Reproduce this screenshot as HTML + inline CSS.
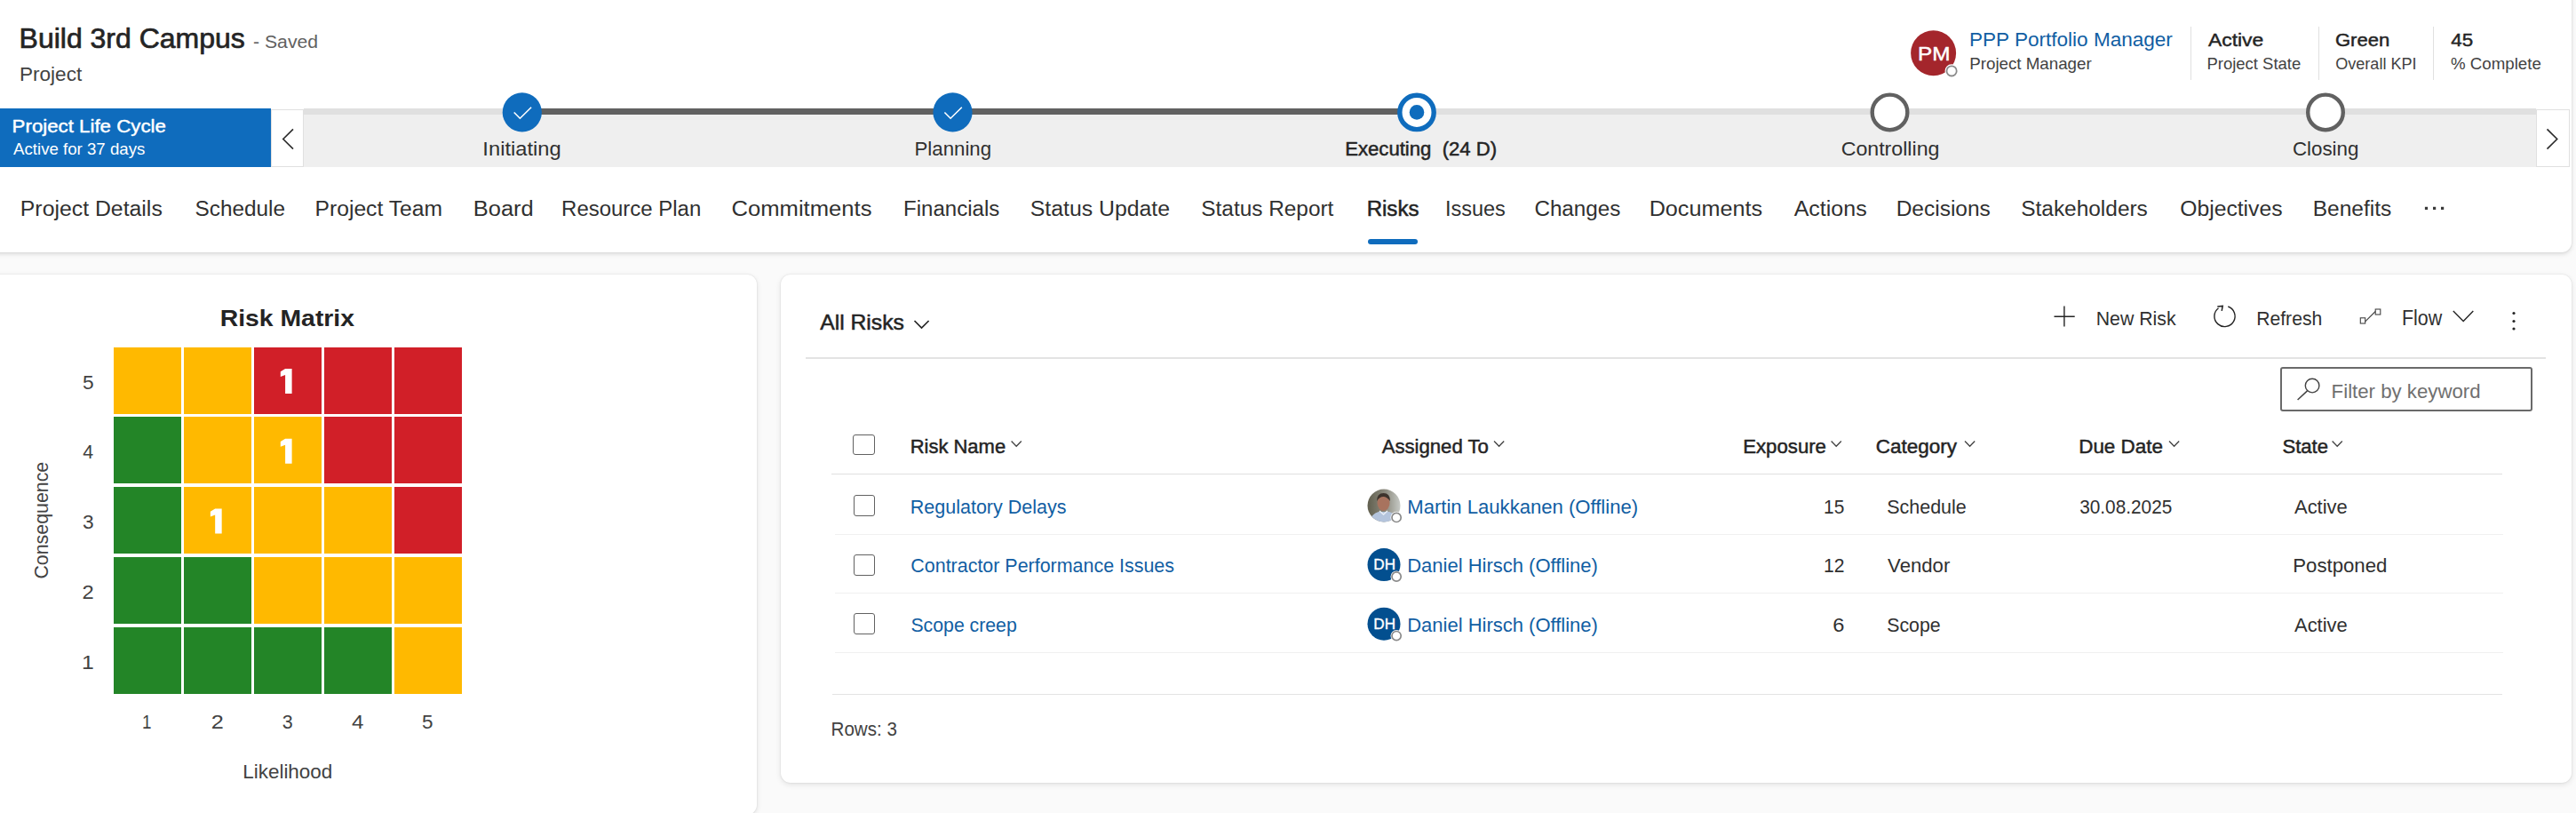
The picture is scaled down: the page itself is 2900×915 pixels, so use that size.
<!DOCTYPE html>
<html><head><meta charset="utf-8"><style>
html,body{margin:0;padding:0;}
body{width:2900px;height:915px;overflow:hidden;position:relative;background:#fafafa;font-family:"Liberation Sans",sans-serif;}
svg{position:absolute;left:0;top:0;}
svg text{font-family:"Liberation Sans",sans-serif;white-space:pre;}
</style></head><body>
<div style="position:absolute;left:-20.00px;top:-20.00px;width:2915.30px;height:303.50px;background:#fff;border-radius:11px;box-shadow:0 0 2px rgba(0,0,0,.10),0 2px 5px rgba(0,0,0,.13);"></div>
<div style="position:absolute;left:-20.00px;top:309.00px;width:872.30px;height:608.00px;background:#fff;border-radius:11px;box-shadow:0 0 2px rgba(0,0,0,.12),0 2px 6px rgba(0,0,0,.10);"></div>
<div style="position:absolute;left:878.60px;top:309.00px;width:2016.70px;height:572.00px;background:#fff;border-radius:11px;box-shadow:0 0 2px rgba(0,0,0,.12),0 2px 6px rgba(0,0,0,.10);"></div>
<div style="position:absolute;left:2465.50px;top:29.70px;width:1.00px;height:60.60px;background:#e0e0e0;"></div>
<div style="position:absolute;left:2609.50px;top:29.70px;width:1.00px;height:60.60px;background:#e0e0e0;"></div>
<div style="position:absolute;left:2739.30px;top:29.70px;width:1.00px;height:60.60px;background:#e0e0e0;"></div>
<div style="position:absolute;left:0.00px;top:122.00px;width:305.30px;height:66.00px;background:#0f6cbd;"></div>
<div style="position:absolute;left:305.30px;top:122.50px;width:37.10px;height:65.50px;background:#fff;box-sizing:border-box;border:1px solid #e0e0e0;"></div>
<div style="position:absolute;left:342.40px;top:122.00px;width:2512.60px;height:66.00px;background:#efefef;"></div>
<div style="position:absolute;left:342.40px;top:122.00px;width:2512.60px;height:7.00px;background:#e0e0e0;"></div>
<div style="position:absolute;left:587.80px;top:122.00px;width:1007.20px;height:7.00px;background:#616161;"></div>
<div style="position:absolute;left:2855.00px;top:122.50px;width:37.50px;height:65.50px;background:#fff;box-sizing:border-box;border:1px solid #e0e0e0;"></div>
<div style="position:absolute;left:1540.00px;top:269.20px;width:56.00px;height:5.50px;background:#0f6cbd;border-radius:3px;"></div>
<div style="position:absolute;left:128.20px;top:390.50px;width:75.60px;height:75.00px;background:#ffb900;"></div>
<div style="position:absolute;left:207.13px;top:390.50px;width:75.60px;height:75.00px;background:#ffb900;"></div>
<div style="position:absolute;left:286.06px;top:390.50px;width:75.60px;height:75.00px;background:#d11f28;"></div>
<div style="position:absolute;left:364.99px;top:390.50px;width:75.60px;height:75.00px;background:#d11f28;"></div>
<div style="position:absolute;left:443.92px;top:390.50px;width:75.60px;height:75.00px;background:#d11f28;"></div>
<div style="position:absolute;left:128.20px;top:469.30px;width:75.60px;height:75.00px;background:#238527;"></div>
<div style="position:absolute;left:207.13px;top:469.30px;width:75.60px;height:75.00px;background:#ffb900;"></div>
<div style="position:absolute;left:286.06px;top:469.30px;width:75.60px;height:75.00px;background:#ffb900;"></div>
<div style="position:absolute;left:364.99px;top:469.30px;width:75.60px;height:75.00px;background:#d11f28;"></div>
<div style="position:absolute;left:443.92px;top:469.30px;width:75.60px;height:75.00px;background:#d11f28;"></div>
<div style="position:absolute;left:128.20px;top:548.10px;width:75.60px;height:75.00px;background:#238527;"></div>
<div style="position:absolute;left:207.13px;top:548.10px;width:75.60px;height:75.00px;background:#ffb900;"></div>
<div style="position:absolute;left:286.06px;top:548.10px;width:75.60px;height:75.00px;background:#ffb900;"></div>
<div style="position:absolute;left:364.99px;top:548.10px;width:75.60px;height:75.00px;background:#ffb900;"></div>
<div style="position:absolute;left:443.92px;top:548.10px;width:75.60px;height:75.00px;background:#d11f28;"></div>
<div style="position:absolute;left:128.20px;top:626.90px;width:75.60px;height:75.00px;background:#238527;"></div>
<div style="position:absolute;left:207.13px;top:626.90px;width:75.60px;height:75.00px;background:#238527;"></div>
<div style="position:absolute;left:286.06px;top:626.90px;width:75.60px;height:75.00px;background:#ffb900;"></div>
<div style="position:absolute;left:364.99px;top:626.90px;width:75.60px;height:75.00px;background:#ffb900;"></div>
<div style="position:absolute;left:443.92px;top:626.90px;width:75.60px;height:75.00px;background:#ffb900;"></div>
<div style="position:absolute;left:128.20px;top:705.70px;width:75.60px;height:75.00px;background:#238527;"></div>
<div style="position:absolute;left:207.13px;top:705.70px;width:75.60px;height:75.00px;background:#238527;"></div>
<div style="position:absolute;left:286.06px;top:705.70px;width:75.60px;height:75.00px;background:#238527;"></div>
<div style="position:absolute;left:364.99px;top:705.70px;width:75.60px;height:75.00px;background:#238527;"></div>
<div style="position:absolute;left:443.92px;top:705.70px;width:75.60px;height:75.00px;background:#ffb900;"></div>
<div style="position:absolute;left:906.90px;top:402.40px;width:1959.60px;height:1.80px;background:#e3e3e3;"></div>
<div style="position:absolute;left:2567.20px;top:413.20px;width:283.40px;height:50.00px;background:#fff;box-sizing:border-box;border:2px solid #6a6a6a;border-radius:3px;"></div>
<div style="position:absolute;left:959.60px;top:488.90px;width:25.70px;height:23.60px;background:#fff;box-sizing:border-box;border:1.6px solid #616161;border-radius:3px;"></div>
<div style="position:absolute;left:936.40px;top:532.60px;width:1881.10px;height:1.30px;background:#e0e0e0;"></div>
<div style="position:absolute;left:961.40px;top:557.00px;width:24.00px;height:24.00px;background:#fff;box-sizing:border-box;border:1.6px solid #616161;border-radius:3px;"></div>
<div style="position:absolute;left:940.00px;top:600.80px;width:1877.50px;height:1.00px;background:#f0f0f0;"></div>
<div style="position:absolute;left:961.40px;top:623.60px;width:24.00px;height:24.00px;background:#fff;box-sizing:border-box;border:1.6px solid #616161;border-radius:3px;"></div>
<div style="position:absolute;left:940.00px;top:667.40px;width:1877.50px;height:1.00px;background:#f0f0f0;"></div>
<div style="position:absolute;left:961.40px;top:690.20px;width:24.00px;height:24.00px;background:#fff;box-sizing:border-box;border:1.6px solid #616161;border-radius:3px;"></div>
<div style="position:absolute;left:940.00px;top:734.20px;width:1877.50px;height:1.00px;background:#f0f0f0;"></div>
<div style="position:absolute;left:936.70px;top:781.30px;width:1880.80px;height:1.20px;background:#e3e3e3;"></div>
<svg width="2900" height="915" viewBox="0 0 2900 915">
<text transform="translate(21.54 53.80) scale(1.0287 1)" font-size="31.12" fill="#242424" stroke="#242424" stroke-width="0.68" stroke-linejoin="round">Build 3rd Campus</text>
<text transform="translate(285.05 53.80) scale(1.0334 1)" font-size="20.51" fill="#616161">- Saved</text>
<text transform="translate(21.89 90.60) scale(1.0664 1)" font-size="21.20" fill="#424242">Project</text>
<circle cx="2176.6" cy="59.8" r="25.5" fill="#a4262c"/>
<text transform="translate(2159.05 67.90) scale(1.1121 1)" font-size="21.89" fill="#fff" stroke="#fff" stroke-width="0.48" stroke-linejoin="round">PM</text>
<circle cx="2197.1" cy="79.9" r="6.3" fill="#fff" stroke="#fff" stroke-width="2.5"/><circle cx="2197.1" cy="79.9" r="5.6" fill="#fff" stroke="#8a8a8a" stroke-width="1.8"/>
<text transform="translate(2217.00 52.10) scale(1.0570 1)" font-size="21.34" fill="#115ea3">PPP Portfolio Manager</text>
<text transform="translate(2217.30 77.80) scale(1.0313 1)" font-size="18.17" fill="#424242">Project Manager</text>
<text transform="translate(2485.90 51.70) scale(1.0950 1)" font-size="20.93" fill="#242424" stroke="#242424" stroke-width="0.46" stroke-linejoin="round">Active</text>
<text transform="translate(2484.52 77.50) scale(1.0560 1)" font-size="17.49" fill="#424242">Project State</text>
<text transform="translate(2628.90 51.70) scale(1.0543 1)" font-size="20.93" fill="#242424" stroke="#242424" stroke-width="0.46" stroke-linejoin="round">Green</text>
<text transform="translate(2629.19 77.50) scale(1.0345 1)" font-size="17.49" fill="#424242">Overall KPI</text>
<text transform="translate(2759.25 51.70) scale(1.0694 1)" font-size="20.93" fill="#242424" stroke="#242424" stroke-width="0.46" stroke-linejoin="round">45</text>
<text transform="translate(2759.05 77.50) scale(1.0692 1)" font-size="17.49" fill="#424242">% Complete</text>
<text transform="translate(13.62 148.50) scale(1.0573 1)" font-size="21.07" fill="#fff" stroke="#fff" stroke-width="0.46" stroke-linejoin="round">Project Life Cycle</text>
<text transform="translate(15.10 174.40) scale(1.0191 1)" font-size="18.31" fill="#fff">Active for 37 days</text>
<polyline points="330,145.3 318.8,156.5 330,167.7" fill="none" stroke="#303030" stroke-width="1.7"/>
<polyline points="2867.5,145.3 2878.7,156.5 2867.5,167.7" fill="none" stroke="#303030" stroke-width="1.7"/>
<circle cx="587.8" cy="126.4" r="22.1" fill="#0f6cbd"/>
<polyline points="578.7,126.5 585.4,133.2 598.1,120.7" fill="none" stroke="#fff" stroke-width="1.6"/>
<circle cx="1072.5" cy="126.4" r="22.1" fill="#0f6cbd"/>
<polyline points="1063.4,126.5 1070.1,133.2 1082.8,120.7" fill="none" stroke="#fff" stroke-width="1.6"/>
<circle cx="1595" cy="126.4" r="19.2" fill="#fff" stroke="#0f6cbd" stroke-width="5.4"/><circle cx="1595" cy="126.4" r="8.3" fill="#0f6cbd"/>
<circle cx="2127.5" cy="126.4" r="19.8" fill="#fff" stroke="#616161" stroke-width="4.4"/>
<circle cx="2618.0" cy="126.4" r="19.8" fill="#fff" stroke="#616161" stroke-width="4.4"/>
<text transform="translate(543.36 174.60) scale(1.1190 1)" font-size="21.20" fill="#303030">Initiating</text>
<text transform="translate(1029.52 174.60) scale(1.0503 1)" font-size="21.20" fill="#303030">Planning</text>
<text transform="translate(1514.23 174.60) scale(1.0446 1)" font-size="21.20" fill="#242424" stroke="#242424" stroke-width="0.47" stroke-linejoin="round">Executing  (24 D)</text>
<text transform="translate(2072.64 174.60) scale(1.0939 1)" font-size="21.20" fill="#303030">Controlling</text>
<text transform="translate(2580.88 174.60) scale(1.0546 1)" font-size="21.20" fill="#303030">Closing</text>
<text transform="translate(22.81 243.30) scale(1.0249 1)" font-size="24.23" fill="#303030">Project Details</text>
<text transform="translate(219.50 243.30) scale(1.0054 1)" font-size="24.23" fill="#303030">Schedule</text>
<text transform="translate(354.53 243.30) scale(1.0188 1)" font-size="24.23" fill="#303030">Project Team</text>
<text transform="translate(532.76 243.30) scale(1.0513 1)" font-size="24.23" fill="#303030">Board</text>
<text transform="translate(632.08 243.30) scale(0.9894 1)" font-size="24.23" fill="#303030">Resource Plan</text>
<text transform="translate(823.52 243.30) scale(1.0573 1)" font-size="24.23" fill="#303030">Commitments</text>
<text transform="translate(1017.08 243.30) scale(0.9929 1)" font-size="24.23" fill="#303030">Financials</text>
<text transform="translate(1159.78 243.30) scale(1.0249 1)" font-size="24.23" fill="#303030">Status Update</text>
<text transform="translate(1352.30 243.30) scale(1.0065 1)" font-size="24.23" fill="#303030">Status Report</text>
<text transform="translate(1538.68 243.30) scale(0.9918 1)" font-size="24.23" fill="#242424" stroke="#242424" stroke-width="0.53" stroke-linejoin="round">Risks</text>
<text transform="translate(1626.88 243.30) scale(0.9701 1)" font-size="24.23" fill="#303030">Issues</text>
<text transform="translate(1727.39 243.30) scale(1.0001 1)" font-size="24.23" fill="#303030">Changes</text>
<text transform="translate(1856.68 243.30) scale(1.0398 1)" font-size="24.23" fill="#303030">Documents</text>
<text transform="translate(2019.70 243.30) scale(1.0314 1)" font-size="24.23" fill="#303030">Actions</text>
<text transform="translate(2134.64 243.30) scale(1.0112 1)" font-size="24.23" fill="#303030">Decisions</text>
<text transform="translate(2275.20 243.30) scale(1.0089 1)" font-size="24.23" fill="#303030">Stakeholders</text>
<text transform="translate(2454.19 243.30) scale(1.0205 1)" font-size="24.23" fill="#303030">Objectives</text>
<text transform="translate(2603.74 243.30) scale(1.0117 1)" font-size="24.23" fill="#303030">Benefits</text>
<rect x="2729.9" y="232.8" width="3.2" height="3.2" fill="#3a3a3a"/>
<rect x="2739.0" y="232.8" width="3.2" height="3.2" fill="#3a3a3a"/>
<rect x="2748.0" y="232.8" width="3.2" height="3.2" fill="#3a3a3a"/>
<text transform="translate(247.66 367.20) scale(1.0905 1)" font-size="26.02" fill="#242424" font-weight="bold">Risk Matrix</text>
<path transform="translate(0.00 0.00)" d="M321.1 415 L328.6 415 L328.6 442.9 L321.1 442.9 L321.1 422 L315.8 424 L315.8 418.2 Z" fill="#fff"/>
<path transform="translate(0.00 78.80)" d="M321.1 415 L328.6 415 L328.6 442.9 L321.1 442.9 L321.1 422 L315.8 424 L315.8 418.2 Z" fill="#fff"/>
<path transform="translate(-78.93 157.60)" d="M321.1 415 L328.6 415 L328.6 442.9 L321.1 442.9 L321.1 422 L315.8 424 L315.8 418.2 Z" fill="#fff"/>
<text transform="translate(92.89 437.55) scale(1.0654 1)" font-size="21.34" fill="#424242">5</text>
<text transform="translate(93.37 516.35) scale(1.0021 1)" font-size="21.34" fill="#424242">4</text>
<text transform="translate(92.89 595.15) scale(1.0654 1)" font-size="21.34" fill="#424242">3</text>
<text transform="translate(92.61 673.95) scale(1.1123 1)" font-size="21.34" fill="#424242">2</text>
<text transform="translate(91.94 752.75) scale(1.1634 1)" font-size="21.34" fill="#424242">1</text>
<text transform="translate(160.09 819.90) scale(0.8400 1)" font-size="22.44" fill="#424242">1</text>
<text transform="translate(237.74 819.90) scale(1.1262 1)" font-size="22.44" fill="#424242">2</text>
<text transform="translate(317.64 819.90) scale(0.9569 1)" font-size="22.44" fill="#424242">3</text>
<text transform="translate(396.12 819.90) scale(1.0765 1)" font-size="22.44" fill="#424242">4</text>
<text transform="translate(475.10 819.90) scale(1.0038 1)" font-size="22.44" fill="#424242">5</text>
<text transform="translate(273.20 875.90) scale(0.9826 1)" font-size="22.86" fill="#424242">Likelihood</text>
<text transform="translate(53.50 650.50) rotate(-90) scale(0.9822 1) translate(-1.09 0)" font-size="21.75" fill="#424242">Consequence</text>
<text transform="translate(923.20 371.00) scale(1.0083 1)" font-size="24.51" fill="#242424" stroke="#242424" stroke-width="0.54" stroke-linejoin="round">All Risks</text>
<polyline points="1029.5,361 1037.5,369 1045.6,361" fill="none" stroke="#242424" stroke-width="1.7"/>
<path d="M2312.5 356.2H2335.7M2323.9 344.6V367.6" stroke="#242424" stroke-width="1.4" fill="none"/>
<text transform="translate(2359.70 365.80) scale(0.9599 1)" font-size="22.17" fill="#303030">New Risk</text>
<path d="M2508.3 345 A11.6 11.6 0 1 1 2497.5 346.7" fill="none" stroke="#242424" stroke-width="1.4"/><path d="M2496.3 344.9 L2502.2 344.4 L2501.2 349.8" fill="none" stroke="#242424" stroke-width="1.5"/>
<text transform="translate(2540.21 365.80) scale(0.9547 1)" font-size="22.17" fill="#303030">Refresh</text>
<rect x="2657.3" y="357.8" width="5.4" height="6.2" fill="none" stroke="#424242" stroke-width="1.1"/><rect x="2674.2" y="348" width="5.6" height="6" fill="none" stroke="#424242" stroke-width="1.1"/><path d="M2662.7 361.8 L2674.2 350.5" stroke="#424242" stroke-width="1.1"/>
<text transform="translate(2703.89 365.60) scale(0.9047 1)" font-size="23.68" fill="#303030">Flow</text>
<polyline points="2761.8,350.1 2773.2,361.5 2784.3,350.1" fill="none" stroke="#242424" stroke-width="1.4"/>
<circle cx="2830" cy="352.5" r="1.6" fill="#242424"/>
<circle cx="2830" cy="361.5" r="1.6" fill="#242424"/>
<circle cx="2830" cy="370.0" r="1.6" fill="#242424"/>
<circle cx="2603.1" cy="434.1" r="7.8" fill="none" stroke="#424242" stroke-width="1.4"/><path d="M2597.5 439.9 L2586.6 450" stroke="#424242" stroke-width="1.5"/>
<text transform="translate(2624.62 448.10) scale(1.0289 1)" font-size="21.62" fill="#707070">Filter by keyword</text>
<text transform="translate(1024.64 509.50) scale(1.0306 1)" font-size="21.34" fill="#242424" stroke="#242424" stroke-width="0.47" stroke-linejoin="round">Risk Name</text>
<polyline points="1138.6,496.5 1144.2,502.3 1149.8,496.5" fill="none" stroke="#424242" stroke-width="1.3"/>
<text transform="translate(1555.70 509.50) scale(1.0372 1)" font-size="21.34" fill="#242424" stroke="#242424" stroke-width="0.47" stroke-linejoin="round">Assigned To</text>
<polyline points="1682.0,496.5 1687.6,502.3 1693.2,496.5" fill="none" stroke="#424242" stroke-width="1.3"/>
<text transform="translate(1962.22 509.50) scale(1.0400 1)" font-size="21.34" fill="#242424" stroke="#242424" stroke-width="0.47" stroke-linejoin="round">Exposure</text>
<polyline points="2061.6,496.5 2067.2,502.3 2072.8,496.5" fill="none" stroke="#424242" stroke-width="1.3"/>
<text transform="translate(2111.68 509.50) scale(1.0540 1)" font-size="21.34" fill="#242424" stroke="#242424" stroke-width="0.47" stroke-linejoin="round">Category</text>
<polyline points="2212.0,496.5 2217.6,502.3 2223.2,496.5" fill="none" stroke="#424242" stroke-width="1.3"/>
<text transform="translate(2340.20 509.50) scale(1.0515 1)" font-size="21.34" fill="#242424" stroke="#242424" stroke-width="0.47" stroke-linejoin="round">Due Date</text>
<polyline points="2442.0,496.5 2447.6,502.3 2453.2,496.5" fill="none" stroke="#424242" stroke-width="1.3"/>
<text transform="translate(2569.41 509.50) scale(1.0353 1)" font-size="21.34" fill="#242424" stroke="#242424" stroke-width="0.47" stroke-linejoin="round">State</text>
<polyline points="2625.6,496.5 2631.2,502.3 2636.8,496.5" fill="none" stroke="#424242" stroke-width="1.3"/>
<text transform="translate(1024.68 577.60) scale(1.0159 1)" font-size="21.20" fill="#115ea3">Regulatory Delays</text>
<defs><clipPath id="av"><circle cx="1558" cy="569.0" r="18.5"/></clipPath><linearGradient id="bgg" x1="0" x2="1"><stop offset="0" stop-color="#5f5d4c"/><stop offset="0.55" stop-color="#8d8c80"/><stop offset="1" stop-color="#c9ccc8"/></linearGradient></defs>
<g clip-path="url(#av)"><rect x="1539" y="550.0" width="38" height="38" fill="url(#bgg)"/><path d="M1541 588.0 Q1544 578.0 1552 576.0 L1564 576.0 Q1572 578.0 1575 588.0 L1577 589.0 L1539 589.0 Z" fill="#b4c4dc"/><ellipse cx="1557.5" cy="566.0" rx="7" ry="9" fill="#a8735e"/><path d="M1550 564.0 Q1550 555.0 1557.5 555.0 Q1565 555.0 1565 564.0 Q1561 559.0 1557.5 559.0 Q1553 559.0 1550 564.0 Z" fill="#3d332c"/><path d="M1553 575.0 L1557.5 579.0 L1562 575.0" fill="none" stroke="#e8eef6" stroke-width="1.5"/></g>
<circle cx="1572.1" cy="582.4" r="6.6" fill="#fff"/><circle cx="1572.1" cy="582.4" r="5.1" fill="#fff" stroke="#8a8a8a" stroke-width="1.7"/>
<text transform="translate(1584.23 577.60) scale(1.0427 1)" font-size="21.20" fill="#115ea3">Martin Laukkanen (Offline)</text>
<text transform="translate(2053.03 577.60) scale(0.9859 1)" font-size="21.20" fill="#303030">15</text>
<text transform="translate(2124.23 577.60) scale(1.0138 1)" font-size="21.20" fill="#303030">Schedule</text>
<text transform="translate(2341.17 577.60) scale(0.9816 1)" font-size="21.20" fill="#303030">30.08.2025</text>
<text transform="translate(2583.00 577.60) scale(1.0349 1)" font-size="21.20" fill="#303030">Active</text>
<text transform="translate(1025.33 644.20) scale(1.0115 1)" font-size="21.20" fill="#115ea3">Contractor Performance Issues</text>
<circle cx="1558" cy="635.6" r="18.5" fill="#034f8f"/>
<text transform="translate(1546.33 641.00) scale(1.0531 1)" font-size="16.25" fill="#fff" stroke="#fff" stroke-width="0.36" stroke-linejoin="round">DH</text>
<circle cx="1572.1" cy="649.0" r="6.6" fill="#fff"/><circle cx="1572.1" cy="649.0" r="5.1" fill="#fff" stroke="#8a8a8a" stroke-width="1.7"/>
<text transform="translate(1584.24 644.20) scale(1.0374 1)" font-size="21.20" fill="#115ea3">Daniel Hirsch (Offline)</text>
<text transform="translate(2053.02 644.20) scale(0.9959 1)" font-size="21.20" fill="#303030">12</text>
<text transform="translate(2125.09 644.20) scale(1.0452 1)" font-size="21.20" fill="#303030">Vendor</text>
<text transform="translate(2581.22 644.20) scale(1.0481 1)" font-size="21.20" fill="#303030">Postponed</text>
<text transform="translate(1025.44 710.80) scale(1.0030 1)" font-size="21.20" fill="#115ea3">Scope creep</text>
<circle cx="1558" cy="702.2" r="18.5" fill="#034f8f"/>
<text transform="translate(1546.33 707.60) scale(1.0531 1)" font-size="16.25" fill="#fff" stroke="#fff" stroke-width="0.36" stroke-linejoin="round">DH</text>
<circle cx="1572.1" cy="715.6" r="6.6" fill="#fff"/><circle cx="1572.1" cy="715.6" r="5.1" fill="#fff" stroke="#8a8a8a" stroke-width="1.7"/>
<text transform="translate(1584.24 710.80) scale(1.0374 1)" font-size="21.20" fill="#115ea3">Daniel Hirsch (Offline)</text>
<text transform="translate(2063.22 710.80) scale(1.1157 1)" font-size="21.20" fill="#303030">6</text>
<text transform="translate(2124.24 710.80) scale(1.0051 1)" font-size="21.20" fill="#303030">Scope</text>
<text transform="translate(2583.00 710.80) scale(1.0349 1)" font-size="21.20" fill="#303030">Active</text>
<text transform="translate(935.55 828.40) scale(0.9579 1)" font-size="21.48" fill="#424242">Rows: 3</text>
</svg>
</body></html>
